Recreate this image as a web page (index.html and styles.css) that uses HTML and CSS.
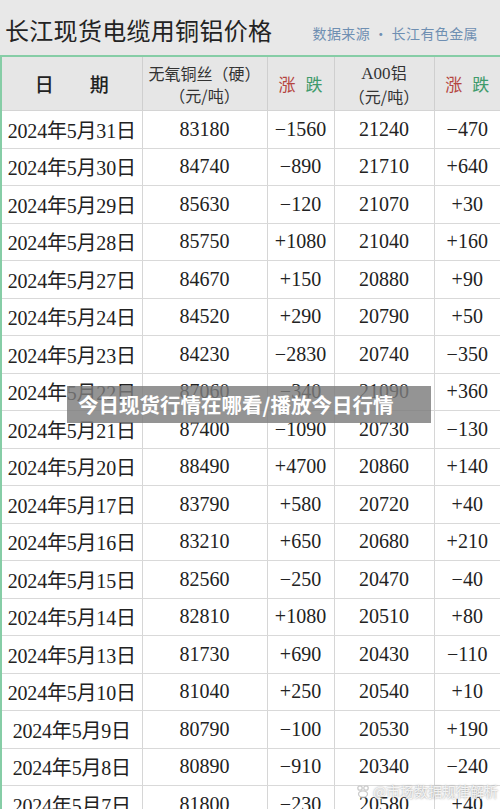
FILE: index.html
```html
<!DOCTYPE html>
<html>
<head>
  <meta charset="utf-8">
  <title>长江现货电缆用铜铝价格</title>
  <link rel="stylesheet" href="styles.css">
</head>
<body>

  <div class="hoja">
    <div class="cabecera">
      <h1>长江现货电缆用铜铝价格</h1>
      <span class="fuente">数据来源 · 长江有色金属</span>
    </div>

    <table class="precios">
      <colgroup>
        <col class="c-fecha"><col class="c-cobre"><col class="c-var"><col class="c-alu"><col class="c-var">
      </colgroup>
      <thead>
        <tr>
          <th class="fecha-tit">日<span class="hueco"></span>期</th>
          <th>无氧铜丝（硬）<br>（元/吨）</th>
          <th class="var-tit"><span class="sube">涨</span> <span class="baja">跌</span></th>
          <th><span class="num">A00</span>铝<br>（元/吨）</th>
          <th class="var-tit"><span class="sube">涨</span> <span class="baja">跌</span></th>
        </tr>
      </thead>
      <tbody>
        <tr><td>2024年5月31日</td><td>83180</td><td class="baja">−1560</td><td>21240</td><td class="baja">−470</td></tr>
        <tr><td>2024年5月30日</td><td>84740</td><td class="baja">−890</td><td>21710</td><td class="sube">+640</td></tr>
        <tr><td>2024年5月29日</td><td>85630</td><td class="baja">−120</td><td>21070</td><td class="sube">+30</td></tr>
        <tr><td>2024年5月28日</td><td>85750</td><td class="sube">+1080</td><td>21040</td><td class="sube">+160</td></tr>
        <tr><td>2024年5月27日</td><td>84670</td><td class="sube">+150</td><td>20880</td><td class="sube">+90</td></tr>
        <tr><td>2024年5月24日</td><td>84520</td><td class="sube">+290</td><td>20790</td><td class="sube">+50</td></tr>
        <tr><td>2024年5月23日</td><td>84230</td><td class="baja">−2830</td><td>20740</td><td class="baja">−350</td></tr>
        <tr><td>2024年5月22日</td><td>87060</td><td class="baja">−340</td><td>21090</td><td class="sube">+360</td></tr>
        <tr><td>2024年5月21日</td><td>87400</td><td class="baja">−1090</td><td>20730</td><td class="baja">−130</td></tr>
        <tr><td>2024年5月20日</td><td>88490</td><td class="sube">+4700</td><td>20860</td><td class="sube">+140</td></tr>
        <tr><td>2024年5月17日</td><td>83790</td><td class="sube">+580</td><td>20720</td><td class="sube">+40</td></tr>
        <tr><td>2024年5月16日</td><td>83210</td><td class="sube">+650</td><td>20680</td><td class="sube">+210</td></tr>
        <tr><td>2024年5月15日</td><td>82560</td><td class="baja">−250</td><td>20470</td><td class="baja">−40</td></tr>
        <tr><td>2024年5月14日</td><td>82810</td><td class="sube">+1080</td><td>20510</td><td class="sube">+80</td></tr>
        <tr><td>2024年5月13日</td><td>81730</td><td class="sube">+690</td><td>20430</td><td class="baja">−110</td></tr>
        <tr><td>2024年5月10日</td><td>81040</td><td class="sube">+250</td><td>20540</td><td class="sube">+10</td></tr>
        <tr><td>2024年5月9日</td><td>80790</td><td class="baja">−100</td><td>20530</td><td class="sube">+190</td></tr>
        <tr><td>2024年5月8日</td><td>80890</td><td class="baja">−910</td><td>20340</td><td class="baja">−240</td></tr>
        <tr><td>2024年5月7日</td><td>81800</td><td class="baja">−230</td><td>20580</td><td class="sube">+40</td></tr>
      </tbody>
    </table>

    <!-- franja del titulo sobre la imagen -->
    <div class="franja">今日现货行情在哪看/播放今日行情</div>

    <div class="marca">
      <svg width="14" height="13" viewBox="0 0 14 13">
        <circle cx="4" cy="3" r="2.2" fill="none" stroke="#ccc" stroke-width="1.3"/>
        <circle cx="10" cy="3" r="2.2" fill="none" stroke="#ccc" stroke-width="1.3"/>
        <ellipse cx="7" cy="9" rx="4.5" ry="3.2" fill="none" stroke="#ccc" stroke-width="1.3"/>
      </svg>
      <span>@市场数据规律解析</span>
    </div>
  </div>

</body>
</html>
```

FILE: styles.css
```css
body {
  margin: 0;
  background-color: #fff;
  font-family: "Liberation Serif", "Noto Sans CJK SC", serif;
  color: #222;
}

.hoja {
  position: relative;
  width: 500px;
  height: 809px;
  overflow: hidden;
}

.cabecera {
  height: 55px;
  background-color: #e8e8e8; /* gris del titulo */
  display: flex;
  align-items: center;
  justify-content: space-between;
  padding: 0 22px 0 5px;
  border-bottom: 2px solid #86cda6;
}

.cabecera h1 {
  margin: 0;
  font-family: "Noto Sans CJK SC", sans-serif;
  font-weight: 400;
  font-size: 24px;
  letter-spacing: 0.3px;
  color: #232323;
  padding-top: 4px;
}

.fuente {
  font-family: "Noto Sans CJK SC", sans-serif;
  font-size: 14px;
  color: #6f8fb2;
  padding-top: 10px;
  letter-spacing: 0.4px;
}

.precios {
  width: 500px;
  border-collapse: collapse;
  table-layout: fixed;
  border-left: 2px solid #86cda6;
  border-right: 2px solid #86cda6;
}

.c-fecha { width: 141px; }
.c-cobre { width: 125px; }
.c-var { width: 67px; }
.c-alu { width: 100px; }

.precios th {
  height: 53px;
  background-color: #e6e6e6;
  font-family: "Noto Sans CJK SC", sans-serif;
  font-weight: 400;
  font-size: 16px;
  line-height: 22px;
  color: #333;
  border-right: 1px solid #cfcfcf;
  border-bottom: 1px solid #d4d4d4;
  padding: 0;
}

.precios th .num {
  font-family: "Liberation Serif", serif;
  font-size: 17px;
}

.precios th.fecha-tit {
  font-size: 19px;
  font-weight: 500;
  color: #222;
}

.hueco {
  display: inline-block;
  width: 36px;
}

.precios th.var-tit {
  font-size: 17px;
  word-spacing: 6px;
}

.precios td {
  height: 36.5px;
  padding: 0;
  text-align: center;
  font-size: 20px;
  border-right: 1px solid #d6d6d6;
  border-bottom: 1px solid #d9d9d9;
  color: #222;
}

.precios td:first-child {
  letter-spacing: -0.2px;
}

.sube { color: #b5453f; }
.baja { color: #3f9b6c; }

.franja {
  position: absolute;
  left: 67px;
  top: 386px;
  width: 364px;
  height: 37px;
  background-color: rgba(125, 125, 125, 0.82);
  color: #fff;
  font-family: "Noto Sans CJK SC", sans-serif;
  font-weight: 700;
  font-size: 20.5px;
  line-height: 37px;
  padding-left: 11px;
  box-sizing: border-box;
  white-space: nowrap;
}

.marca {
  position: absolute;
  left: 356px;
  top: 781px;
  display: flex;
  align-items: center;
  gap: 3px;
  font-family: "Noto Sans CJK SC", sans-serif;
  font-size: 14px;
  color: rgba(255, 255, 255, 0.85);
  text-shadow: 0 0 2px rgba(120, 120, 120, 0.9);
}
```
